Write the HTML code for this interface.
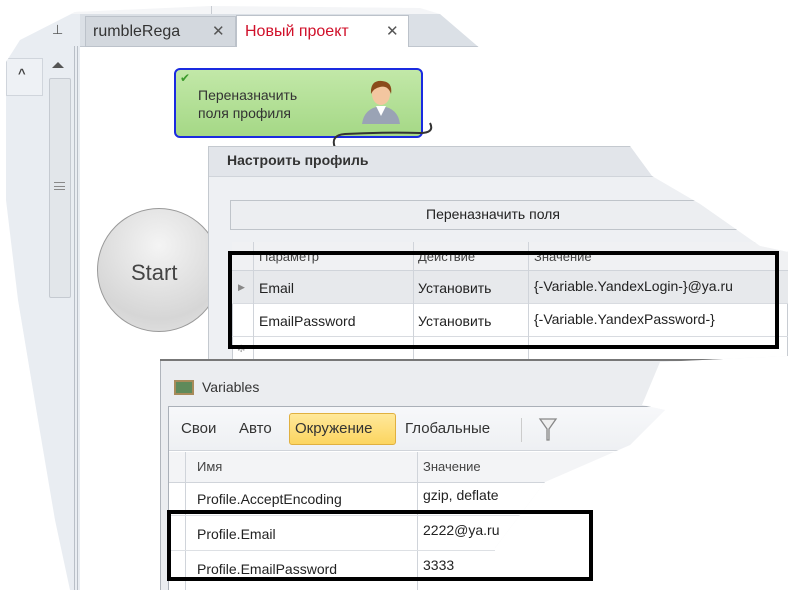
<!DOCTYPE html>
<html><head><meta charset="utf-8"><style>
*{margin:0;padding:0;box-sizing:border-box}
body{width:788px;height:594px;background:#fff;position:relative;overflow:hidden;font-family:"Liberation Sans","DejaVu Sans",sans-serif;color:#222}
#c{position:absolute;left:0;top:0;width:788px;height:594px;
clip-path:polygon(75px 12px,210px 6px,420px 8px,440px 14px,482px 50px,630px 146px,652px 176px,700px 204px,760px 246px,788px 252px,788px 356px,660px 362px,642px 405px,665px 410px,630px 445px,545px 482px,520px 515px,495px 548px,495px 590px,70px 590px,55px 520px,38px 420px,18px 300px,6px 200px,6px 62px,20px 40px)}
.a{position:absolute}
.t{position:absolute;white-space:nowrap;font-size:14px}
</style></head><body>
<div id="c">
 <div class="a" style="left:0;top:0;width:788px;height:594px;background:#fff"></div>
 <!-- left panel -->
 <div class="a" style="left:0;top:0;width:80px;height:594px;background:#e9edf2"></div>
 <div class="a" style="left:0;top:0;width:788px;height:14px;background:#f4f5f7"></div>
 <div class="a" style="left:211px;top:0;width:1px;height:14px;background:#c8ccd2"></div>
 <div class="t" style="left:52px;top:22px;font-size:13px;color:#555">⊥</div>
 <div class="a" style="left:6px;top:58px;width:37px;height:38px;background:#eef1f5;border:1px solid #d0d5dc"></div>
 <div class="t" style="left:18px;top:66px;font-size:13px;color:#444;font-weight:bold">^</div>
 <div class="a" style="left:52px;top:62px;width:0;height:0;border-left:6px solid transparent;border-right:6px solid transparent;border-bottom:6px solid #555"></div>
 <div class="a" style="left:49px;top:78px;width:22px;height:220px;background:#e2e6ea;border:1px solid #c5cad1;border-radius:2px"></div>
 <div class="a" style="left:54px;top:182px;width:11px;height:8px;border-top:1px solid #888;border-bottom:1px solid #888"></div>
 <div class="a" style="left:54px;top:186px;width:11px;height:1px;background:#888"></div>
 <div class="a" style="left:74px;top:46px;width:1px;height:548px;background:#b9bfc7"></div>
 <div class="a" style="left:77px;top:46px;width:1px;height:548px;background:#b9bfc7"></div>
 <!-- tab strip -->
 <div class="a" style="left:80px;top:14px;width:708px;height:33px;background:#dbe0e6;border-bottom:1px solid #c0c6ce"></div>
 <div class="a" style="left:85px;top:16px;width:151px;height:31px;background:#d3d8de;border:1px solid #bcc2ca"></div>
 <div class="t" style="left:93px;top:23px;font-size:16px;color:#333">rumbleRega</div>
 <div class="t" style="left:212px;top:22px;font-size:15px;color:#555;font-weight:bold">✕</div>
 <div class="a" style="left:236px;top:15px;width:173px;height:33px;background:#fff;border:1px solid #bcc2ca;border-bottom:none"></div>
 <div class="t" style="left:245px;top:23px;font-size:16px;color:#d0102a">Новый проект</div>
 <div class="t" style="left:386px;top:22px;font-size:15px;color:#555;font-weight:bold">✕</div>
 <div class="a" style="left:80px;top:47px;width:708px;height:547px;background:#fff"></div>
 <!-- green node -->
 <div class="a" style="left:174px;top:68px;width:249px;height:70px;border:2px solid #1a2be0;border-radius:6px;background:linear-gradient(#c2e8a8,#a5d886)"></div>
 <div class="t" style="left:180px;top:71px;font-size:12px;color:#3a9a2a;font-weight:bold">✔</div>
 <div class="t" style="left:198px;top:87px;font-size:14px;color:#333">Переназначить</div>
 <div class="t" style="left:198px;top:105px;font-size:14px;color:#333">поля профиля</div>
 <svg class="a" style="left:358px;top:76px" width="46" height="50" viewBox="0 0 46 50">
  <path d="M4 48 Q6 32 23 30 Q40 32 42 48Z" fill="#9aa3b5"/>
  <path d="M18 30 L23 40 L28 30Z" fill="#fff"/>
  <ellipse cx="23" cy="18" rx="9" ry="11" fill="#f3c6a0"/>
  <path d="M13 18 Q12 4 24 5 Q35 6 33 18 Q30 9 22 11 Q16 12 13 18Z" fill="#8a4b1c"/>
 </svg>
 <svg class="a" style="left:325px;top:118px" width="110" height="40"><path d="M105 5 Q110 15 95 15 Q60 14 20 16 Q5 17 10 30" fill="none" stroke="#333" stroke-width="2"/></svg>
 <!-- Start -->
 <div class="a" style="left:97px;top:208px;width:124px;height:124px;border-radius:50%;border:1px solid #9a9a9a;background:radial-gradient(circle at 50% 30%,#f4f4f4,#d6d6d6 70%,#e6e6e6)"></div>
 <div class="t" style="left:131px;top:260px;font-size:22px;color:#444">Start</div>
 <!-- dialog -->
 <div class="a" style="left:208px;top:146px;width:580px;height:216px;background:#eef0f3;border-left:1px solid #c4c9cf;border-top:1px solid #c4c9cf"></div>
 <div class="a" style="left:209px;top:147px;width:579px;height:30px;background:#e2e5ea;border-bottom:1px solid #d0d4da"></div>
 <div class="t" style="left:227px;top:152px;font-size:14px;font-weight:bold;color:#333">Настроить профиль</div>
 <div class="a" style="left:230px;top:200px;width:558px;height:30px;background:#eceef1;border:1px solid #bfc4ca"></div>
 <div class="t" style="left:426px;top:206px;font-size:14px;color:#222">Переназначить поля</div>
 <div class="a" style="left:232px;top:242px;width:556px;height:118px;background:#fff;border:1px solid #c8ccd2"></div>
 <div class="a" style="left:232px;top:242px;width:556px;height:29px;background:#f0f1f3;border-bottom:1px solid #d0d4da"></div>
 <div class="a" style="left:232px;top:271px;width:556px;height:33px;background:#e7e9ec;border-bottom:1px solid #d8dbe0"></div>
 <div class="a" style="left:232px;top:304px;width:556px;height:33px;border-bottom:1px solid #d8dbe0"></div>
 <div class="a" style="left:253px;top:242px;width:1px;height:118px;background:#d0d4da"></div>
 <div class="a" style="left:413px;top:242px;width:1px;height:118px;background:#d0d4da"></div>
 <div class="a" style="left:528px;top:242px;width:1px;height:118px;background:#d0d4da"></div>
 <div class="t" style="left:259px;top:249px;font-size:13px;color:#444">Параметр</div>
 <div class="t" style="left:418px;top:249px;font-size:13px;color:#444">Действие</div>
 <div class="t" style="left:534px;top:249px;font-size:13px;color:#444">Значение</div>
 <div class="t" style="left:238px;top:282px;font-size:9px;color:#888">▶</div>
 <div class="t" style="left:259px;top:280px;font-size:14px">Email</div>
 <div class="t" style="left:418px;top:280px;font-size:14px">Установить</div>
 <div class="t" style="left:534px;top:278px;font-size:14px">{-Variable.YandexLogin-}@ya.ru</div>
 <div class="t" style="left:259px;top:313px;font-size:14px">EmailPassword</div>
 <div class="t" style="left:418px;top:313px;font-size:14px">Установить</div>
 <div class="t" style="left:534px;top:311px;font-size:14px">{-Variable.YandexPassword-}</div>
 <div class="t" style="left:237px;top:344px;font-size:10px;color:#aaa">✻</div>
 <div class="a" style="left:160px;top:359px;width:628px;height:2px;background:#777"></div>
 <!-- variables -->
 <div class="a" style="left:160px;top:361px;width:628px;height:233px;background:#ebedf0;border-left:1px solid #b0b5bc"></div>
 <div class="a" style="left:174px;top:380px;width:20px;height:15px;background:#5f8a5a;border:2px solid #a88b5a"></div>
 <div class="t" style="left:202px;top:379px;font-size:14px;color:#333">Variables</div>
 <div class="a" style="left:168px;top:406px;width:620px;height:188px;background:#fff;border-left:1px solid #aab0b8;border-top:1px solid #aab0b8"></div>
 <div class="a" style="left:169px;top:407px;width:619px;height:44px;background:linear-gradient(#f7f8fa,#eef0f3);border-bottom:1px solid #d0d4da"></div>
 <div class="t" style="left:181px;top:420px;font-size:15px;color:#333">Свои</div>
 <div class="t" style="left:239px;top:420px;font-size:15px;color:#333">Авто</div>
 <div class="a" style="left:289px;top:413px;width:107px;height:32px;background:linear-gradient(#ffe89a,#fcd560);border:1px solid #e0b040;border-radius:3px"></div>
 <div class="t" style="left:295px;top:420px;font-size:15px;color:#333">Окружение</div>
 <div class="t" style="left:405px;top:420px;font-size:15px;color:#333">Глобальные</div>
 <div class="a" style="left:521px;top:418px;width:1px;height:24px;background:#ccc"></div>
 <svg class="a" style="left:538px;top:417px" width="20" height="26"><path d="M2 2 H18 L11 12 V23 H9 V12 Z" fill="#eee" stroke="#888" stroke-width="1.3"/></svg>
 <div class="a" style="left:169px;top:452px;width:619px;height:31px;background:#f3f4f6;border-bottom:1px solid #d0d4da"></div>
 <div class="a" style="left:185px;top:452px;width:1px;height:142px;background:#d0d4da"></div>
 <div class="a" style="left:417px;top:452px;width:1px;height:142px;background:#d0d4da"></div>
 <div class="t" style="left:197px;top:459px;font-size:13px;color:#444">Имя</div>
 <div class="t" style="left:423px;top:459px;font-size:13px;color:#444">Значение</div>
 <div class="a" style="left:169px;top:515px;width:619px;height:1px;background:#dde0e4"></div>
 <div class="a" style="left:169px;top:550px;width:619px;height:1px;background:#dde0e4"></div>
 <div class="t" style="left:197px;top:491px;font-size:14px">Profile.AcceptEncoding</div>
 <div class="t" style="left:423px;top:487px;font-size:14px">gzip, deflate</div>
 <div class="t" style="left:197px;top:526px;font-size:14px">Profile.Email</div>
 <div class="t" style="left:423px;top:522px;font-size:14px">2222@ya.ru</div>
 <div class="t" style="left:197px;top:561px;font-size:14px">Profile.EmailPassword</div>
 <div class="t" style="left:423px;top:557px;font-size:14px">3333</div>
</div>
<div class="a" style="left:228px;top:251px;width:551px;height:98px;border:4px solid #000"></div>
<div class="a" style="left:167px;top:510px;width:426px;height:71px;border:4px solid #000"></div>
</body></html>
